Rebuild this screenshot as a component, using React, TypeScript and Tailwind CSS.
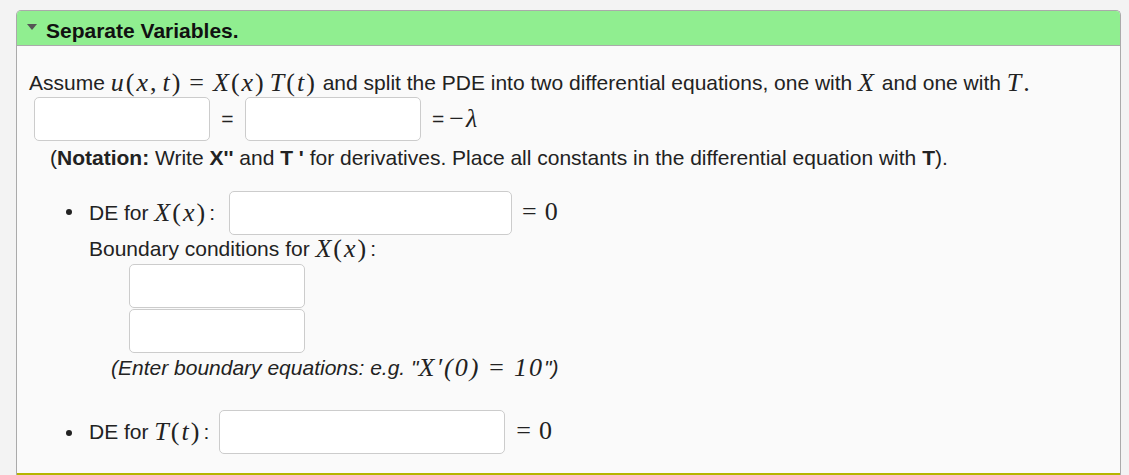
import React from "react";

const sans = { fontFamily: '"Liberation Sans", Arial, sans-serif' };

function M({ children }: { children: React.ReactNode }) {
  return (
    <span className="font-['Liberation_Serif',serif] text-[26px] leading-none tracking-[2px] whitespace-nowrap">
      {children}
    </span>
  );
}

function I({ children }: { children: React.ReactNode }) {
  return <i>{children}</i>;
}

function Eq() {
  return <span className="mx-[7px]">=</span>;
}

function Box({ w }: { w: string }) {
  return (
    <input
      type="text"
      className={`${w} h-[44px] rounded-[5px] border border-[#cccccc] bg-white px-2 outline-none`}
    />
  );
}

export default function App() {
  return (
    <div className="min-h-[475px] bg-[#f3f3f3] pl-4 pr-2 pt-[10px] text-[21px] text-[#222]" style={sans}>
      <div className="rounded-t-[5px] border border-b-0 border-[#aaaaaa] bg-[#fafafa]">
        <div className="flex h-[35px] items-center rounded-t-[4px] border-b border-[#aaaaaa] bg-[#90ee90] pl-[10px] pt-[5px]">
          <svg width="10" height="6" viewBox="0 0 10 6" className="mr-[9px] mt-[-7px]">
            <polygon points="0,0 10,0 5,6" fill="#555" />
          </svg>
          <span className="font-bold text-[#111]">Separate Variables.</span>
        </div>

        <div className="pl-3 pt-[23px]">
          <div className="flex h-[28px] items-center">
            <span>Assume&nbsp;</span>
            <M>
              <I>u</I>(<I>x</I>,<span className="ml-[4px]" /><I>t</I>)<Eq /><I>X</I>(<I>x</I>)
              <span className="ml-[4px]" />
              <I>T</I>(<I>t</I>)
            </M>
            <span>&nbsp;and split the PDE into two differential equations, one with&nbsp;</span>
            <M>
              <I>X</I>
            </M>
            <span>&nbsp;and one with&nbsp;</span>
            <M>
              <I>T</I>.
            </M>
          </div>

          <div className="flex items-center pl-[5px]">
            <Box w="w-[176px]" />
            <span className="w-[35px] text-center">=</span>
            <Box w="w-[176px]" />
            <span className="ml-[11px]">=</span>
            <M>
              <span className="ml-[5px]">−</span>
              <I>λ</I>
            </M>
          </div>

          <div className="flex h-[34px] items-center pl-[21px]">
            <span>
              (<b>Notation:</b> Write <b>X''</b> and <b>T '</b> for derivatives. Place all constants in the
              differential equation with <b>T</b>).
            </span>
          </div>

          <ul className="mt-[16px] pl-[60px]">
            <li className="relative">
              <span className="absolute left-[-23px] top-[18px] h-[6px] w-[6px] rounded-full bg-[#222]" />
              <div className="flex items-center">
                <span>DE for&nbsp;</span>
                <M>
                  <I>X</I>(<I>x</I>)
                </M>
                <span className="ml-[2px]">:</span>
                <span className="ml-[14px]">
                  <Box w="w-[283px]" />
                </span>
                <span className="ml-[10px]">
                  <M>
                    =<span className="ml-[6px]" />0
                  </M>
                </span>
              </div>
              <div className="flex h-[28px] items-center">
                <span>Boundary conditions for&nbsp;</span>
                <M>
                  <I>X</I>(<I>x</I>)
                </M>
                <span className="ml-[2px]">:</span>
              </div>
              <div className="flex flex-col gap-[1px] pl-[40px] pt-[1px]">
                <Box w="w-[176px]" />
                <Box w="w-[176px]" />
              </div>
              <div className="flex h-[30px] items-center pl-[22px] italic">
                <span>(Enter boundary equations: e.g. "</span>
                <M>
                  <I>X</I>′(0)<Eq />10
                </M>
                <span>")</span>
              </div>
            </li>
            <li className="relative mt-[27px]">
              <span className="absolute left-[-23px] top-[20px] h-[6px] w-[6px] rounded-full bg-[#222]" />
              <div className="flex items-center">
                <span>DE for&nbsp;</span>
                <M>
                  <I>T</I>(<I>t</I>)
                </M>
                <span className="ml-[2px]">:</span>
                <span className="ml-[10px]">
                  <Box w="w-[286px]" />
                </span>
                <span className="ml-[11px]">
                  <M>
                    =<span className="ml-[6px]" />0
                  </M>
                </span>
              </div>
            </li>
          </ul>
          <div className="h-[19px]" />
        </div>
        <div className="h-[2px] bg-[#b5b500]" />
      </div>
    </div>
  );
}
